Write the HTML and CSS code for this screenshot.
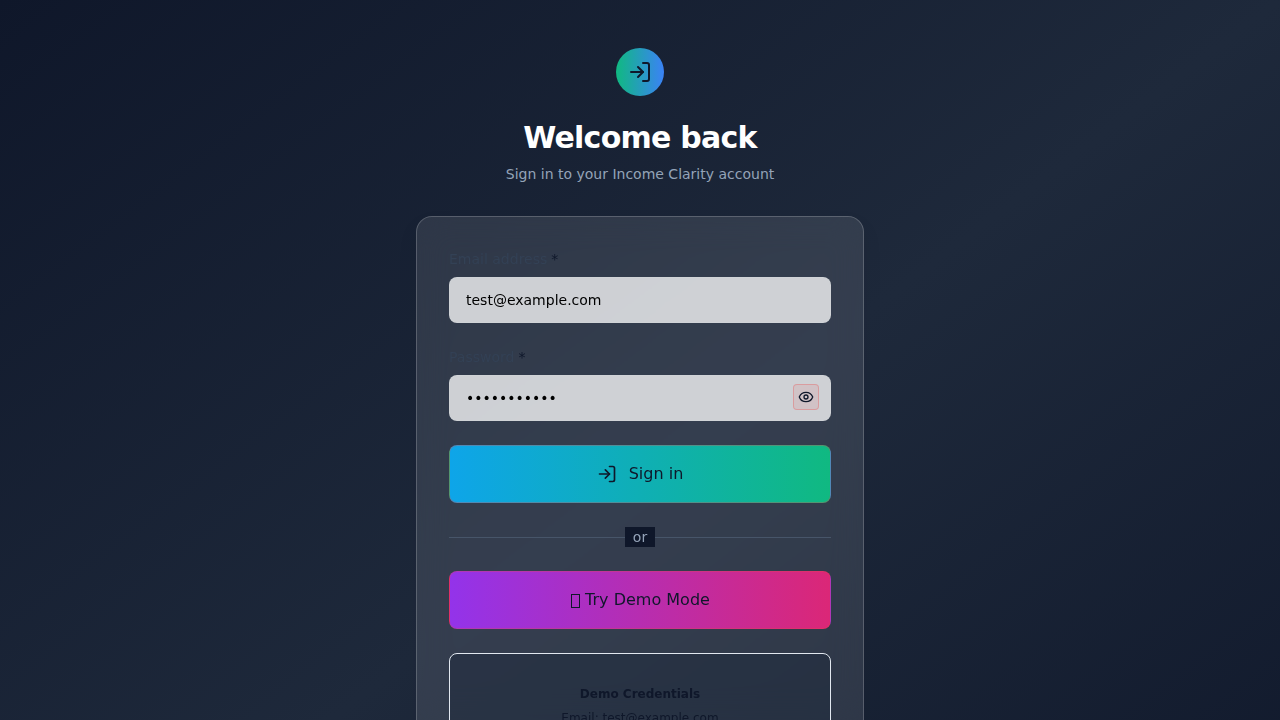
FILE: index.html
```html
<!DOCTYPE html>
<html lang="en">
<head>
<meta charset="utf-8">
<title>Sign in</title>
<link rel="stylesheet" href="styles.css">
</head>
<body>
<main class="page">
  <header class="intro">
    <div class="logo">
      <svg class="icon" width="24" height="24" viewBox="0 0 24 24"><path d="M15 3h4a2 2 0 0 1 2 2v14a2 2 0 0 1-2 2h-4"/><path d="m10 17 5-5-5-5"/><path d="M15 12H3"/></svg>
    </div>
    <h1 class="title">Welcome back</h1>
    <p class="subtitle">Sign in to your Income Clarity account</p>
  </header>
  <form class="card">
    <div class="field">
      <label class="label" for="email">Email address<span class="required">*</span></label>
      <input class="input" id="email" type="email" value="test@example.com">
    </div>
    <div class="field">
      <label class="label" for="password">Password<span class="required">*</span></label>
      <div class="input-wrap">
        <input class="input" id="password" type="password" value="password123">
        <button class="reveal" type="button" aria-label="Show password">
          <svg class="icon" width="16" height="16" viewBox="0 0 24 24"><path d="M2.06 12.35a1 1 0 0 1 0-.7 10.75 10.75 0 0 1 19.88 0 1 1 0 0 1 0 .7 10.75 10.75 0 0 1-19.88 0"/><circle cx="12" cy="12" r="3"/></svg>
        </button>
      </div>
    </div>
    <button class="button button-signin" type="button">
      <svg class="icon" width="20" height="20" viewBox="0 0 24 24"><path d="M15 3h4a2 2 0 0 1 2 2v14a2 2 0 0 1-2 2h-4"/><path d="m10 17 5-5-5-5"/><path d="M15 12H3"/></svg>
      <span>Sign in</span>
    </button>
    <div class="divider"><span class="divider-text">or</span></div>
    <button class="button button-demo" type="button"><span class="glyph-box"></span>Try Demo Mode</button>
    <section class="credentials">
      <p class="credentials-title">Demo Credentials</p>
      <p>Email: test@example.com</p>
    </section>
  </form>
</main>
</body>
</html>
```
FILE: styles.css
```css
* { box-sizing: border-box; margin: 0; padding: 0; }
html, body { height: 720px; overflow: hidden; }
body {
  font-family: "DejaVu Sans", sans-serif;
  color: #0f172a;
  background: #0f172a;
}
.page {
  min-height: 970px;
  padding: 48px 16px;
  display: flex;
  flex-direction: column;
  align-items: center;
  gap: 32px;
  background: linear-gradient(to bottom right, #0f172a, #1e293b, #0f172a);
}
.intro { display: flex; flex-direction: column; align-items: center; }
.logo {
  width: 48px;
  height: 48px;
  border-radius: 50%;
  display: flex;
  align-items: center;
  justify-content: center;
  background: linear-gradient(to right, #10b981, #3b82f6);
}
.icon {
  display: block;
  fill: none;
  stroke: currentColor;
  stroke-width: 2;
  stroke-linecap: round;
  stroke-linejoin: round;
}
.title {
  margin-top: 24px;
  font-size: 30px;
  line-height: 36px;
  font-weight: 700;
  letter-spacing: -0.75px;
  color: #fff;
}
.subtitle { margin-top: 8px; font-size: 14px; line-height: 20px; color: #94a3b8; }
.card {
  width: 448px;
  min-height: 620px;
  padding: 32px;
  display: flex;
  flex-direction: column;
  gap: 24px;
  border: 1px solid rgba(255, 255, 255, 0.2);
  border-radius: 16px;
  background: rgba(255, 255, 255, 0.1);
  backdrop-filter: blur(16px);
  box-shadow: 0 10px 20px rgba(0, 0, 0, 0.07);
}
.field { display: flex; flex-direction: column; gap: 8px; }
.label { font-size: 14px; line-height: 20px; color: #334155; }
.required { margin-left: 4px; color: #0f172a; }
.input-wrap { position: relative; display: flex; }
.input {
  width: 100%;
  height: 46px;
  padding: 12px 16px;
  border: 1px solid rgba(226, 232, 240, 0.1);
  border-radius: 8px;
  font: 14px/20px "DejaVu Sans", sans-serif;
  color: #000;
  background: rgba(255, 255, 255, 0.765);
}
.reveal {
  position: absolute;
  top: 9px;
  right: 12px;
  width: 26px;
  height: 26px;
  display: flex;
  align-items: center;
  justify-content: center;
  border: 1px solid rgba(239, 68, 68, 0.3);
  border-radius: 4px;
  color: #0f172a;
  background: rgba(239, 68, 68, 0.1);
}
.button {
  height: 58px;
  display: flex;
  align-items: center;
  justify-content: center;
  gap: 12px;
  border: 1px solid rgba(239, 68, 68, 0.3);
  border-radius: 8px;
  font: 16px/24px "DejaVu Sans", sans-serif;
  color: #0f172a;
}
.button-signin { background-image: linear-gradient(to right, #0ea5e9, #10b981); }
.button-demo {
  gap: 5px;
  padding-left: 1px;
  background-image: linear-gradient(to right, #9333ea, #db2777);
}
.glyph-box { width: 9px; height: 14px; margin-top: 2px; border: 1px solid currentColor; }
.divider {
  display: flex;
  align-items: center;
  font-size: 14px;
  line-height: 20px;
  color: #94a3b8;
}
.divider::before, .divider::after { content: ""; flex: 1; height: 1px; background: #475569; }
.divider-text { padding: 0 8px; background: #0f172a; }
.credentials {
  flex: 1;
  padding: 32px;
  display: flex;
  flex-direction: column;
  gap: 8px;
  border: 1px solid #e2e8f0;
  border-radius: 8px;
  font-size: 12px;
  line-height: 16px;
  text-align: center;
  background: rgba(30, 41, 59, 0.5);
}
.credentials-title { font-weight: 700; }
```
